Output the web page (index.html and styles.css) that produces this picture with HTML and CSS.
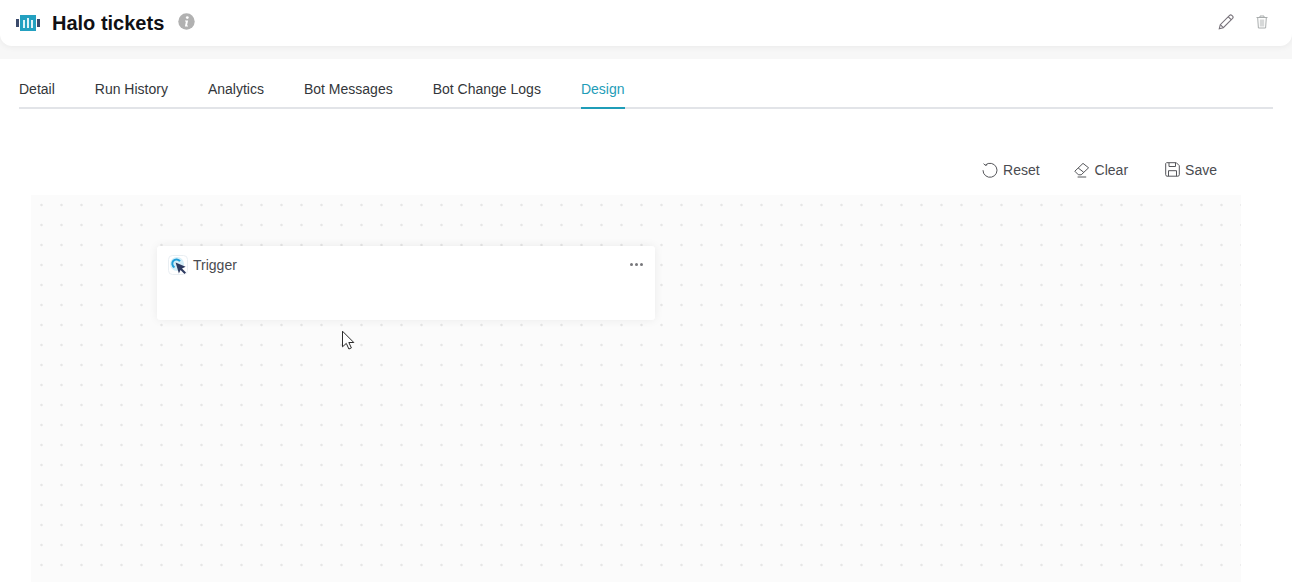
FILE: index.html
```html
<!DOCTYPE html>
<html lang="en">
<head>
<meta charset="utf-8">
<title>Halo tickets</title>
<link rel="stylesheet" href="styles.css">
</head>
<body>
<div class="top-band">
  <header class="header">
    <svg class="logo" width="24" height="16" viewBox="0 0 24 16">
      <rect x="0" y="4" width="3" height="8" fill="#3b4a6b"/>
      <rect x="21" y="4" width="3" height="8" fill="#3b4a6b"/>
      <rect x="4" y="0" width="16" height="16" fill="#23a0c0"/>
      <rect x="7" y="5" width="2" height="8" fill="#dff3f8"/>
      <rect x="11" y="3" width="2" height="10" fill="#dff3f8"/>
      <rect x="15" y="5" width="2" height="8" fill="#dff3f8"/>
    </svg>
    <h1 class="title">Halo tickets</h1>
    <svg class="info" width="17" height="17" viewBox="0 0 17 17">
      <circle cx="8.5" cy="8.5" r="8.2" fill="#b1b1b1"/>
      <circle cx="9.3" cy="4.6" r="1.4" fill="#fff"/>
      <path d="M7 7.4h3.1l-1.1 5h1v1.1H6.9l1-5H7z" fill="#fff"/>
    </svg>
    <div class="header-actions">
      <svg width="16" height="16" viewBox="0 0 16 16" fill="none" stroke="#77727a" stroke-width="1.1">
        <path d="M1.3 14.7l1-4L11.6 1.4a1.6 1.6 0 0 1 2.2 0l.8.8a1.6 1.6 0 0 1 0 2.2L5.3 13.7z"/>
        <path d="M10.3 2.8l2.9 2.9M2.3 10.7l3 3"/>
      </svg>
      <svg width="12" height="14" viewBox="0 0 12 14" fill="none" stroke="#a9adad" stroke-width="1">
        <path d="M0.5 2.5h11M4 2.3V1h4v1.3"/>
        <path d="M1.7 2.8l.7 10.2h7.2l.7-10.2"/>
        <rect x="3.8" y="4.5" width="4.4" height="7" fill="#d6d8d8" stroke="none"/>
      </svg>
    </div>
  </header>
</div>
<main class="main">
  <nav class="tabs">
    <a class="tab">Detail</a>
    <a class="tab">Run History</a>
    <a class="tab">Analytics</a>
    <a class="tab">Bot Messages</a>
    <a class="tab">Bot Change Logs</a>
    <a class="tab tab-active">Design</a>
  </nav>
  <div class="toolbar">
    <button class="tool">
      <svg width="16" height="16" viewBox="0 0 16 16" fill="none" stroke="#55565a" stroke-width="1">
        <path d="M3.4 3A7 7 0 1 1 1 8.2"/>
        <path d="M1.6 1.6l1.6 1.7 2-.4" />
      </svg>
      Reset
    </button>
    <button class="tool">
      <svg width="16" height="16" viewBox="0 0 16 16" fill="none" stroke="#55565a" stroke-width="1">
        <path d="M.8 9.2L9 1.4l5.6 4.4-7.4 7H4.4z"/>
        <path d="M4.2 6l5.4 4.2M3.6 15h8.6"/>
      </svg>
      Clear
    </button>
    <button class="tool tool-save">
      <svg width="15" height="15" viewBox="0 0 15 15" fill="none" stroke="#55565a" stroke-width="1">
        <path d="M1.5.7h9.8l3 3v9a1.5 1.5 0 0 1-1.5 1.5H2A1.5 1.5 0 0 1 .7 12.7V1.5z"/>
        <path d="M4 .9v3.6h6.5V.9M3.5 14.2V8.7h8v5.5"/>
      </svg>
      Save
    </button>
  </div>
  <section class="canvas">
    <article class="node">
      <svg class="node-icon" width="20" height="20" viewBox="0 0 20 20">
        <rect x="0.5" y="0.5" width="19" height="19" rx="4" fill="#fff" stroke="#e9eef2"/>
        <circle cx="9" cy="9" r="7" fill="#d4eef8"/>
        <path d="M12 6.3A4.2 4.2 0 1 0 6.5 12.3" fill="none" stroke="#1f9ed8" stroke-width="2"/>
        <path d="M7.6 7.6l10 4.2-3.6 1.6 4 4-1.5 1.5-4-4-1.6 3.6z" fill="#2d3a60"/>
      </svg>
      <span class="node-label">Trigger</span>
      <span class="node-menu"><i></i><i></i><i></i></span>
    </article>
    <svg class="cursor" width="16" height="22" viewBox="0 0 16 22">
      <path d="M1.5 1.2v15.6l3.8-3.4 2.6 5.6 2.5-1.1-2.6-5.4h5z" fill="#fff" stroke="#2a2a2a" stroke-width="1"/>
    </svg>
  </section>
</main>
</body>
</html>
```

FILE: styles.css
```css
* { box-sizing: border-box; }
html, body { margin: 0; height: 100%; overflow: hidden; background: #fff; }
body { font-family: "Liberation Sans", Arial, sans-serif; color: #3a3a3f; }

.top-band { background: #f7f7f7; height: 59px; }
.header {
  height: 46px;
  background: #fff;
  border-radius: 0 0 12px 12px;
  box-shadow: 0 1px 6px rgba(0, 0, 0, .06);
  display: flex;
  align-items: center;
  padding: 0 24px 0 16px;
}
.logo { display: block; }
.title {
  margin: 0 0 0 12px;
  font: 700 20px/28px "Liberation Sans", Arial, sans-serif;
  color: #101014;
}
.info { margin-left: 14px; margin-bottom: 3px; }
.header-actions {
  margin-left: auto;
  display: flex;
  align-items: center;
  gap: 22px;
  margin-bottom: 3px;
}

.main { padding: 0 19px; }
.tabs {
  display: flex;
  gap: 40px;
  height: 50px;
  border-bottom: 2px solid #e2e4e8;
}
.tab {
  font-size: 14px;
  line-height: 20px;
  padding-top: 20px;
  height: 50px;
  color: #33363a;
}
.tab-active { color: #1f9db8; border-bottom: 2px solid #1f9db8; min-width: 44px; }

.toolbar {
  display: flex;
  justify-content: flex-end;
  align-items: center;
  gap: 34px;
  height: 86px;
  padding: 35px 56px 0 0;
}
.tool {
  display: flex;
  align-items: center;
  gap: 5px;
  padding: 0;
  border: 0;
  background: none;
  font: 14px/20px "Liberation Sans", Arial, sans-serif;
  color: #4a4b50;
}
.tool-save { margin-left: 3px; }

.canvas {
  position: relative;
  margin-left: 12px;
  width: 1210px;
  height: 387px;
  background-color: #fbfbfb;
  background-image: radial-gradient(circle at 10.5px 10px, #e6e6e6 0, #e6e6e6 .8px, transparent 1.7px);
  background-size: 20px 20px;
}
.node {
  position: absolute;
  left: 126px;
  top: 51px;
  width: 498px;
  height: 74px;
  background: #fff;
  border-radius: 3px;
  box-shadow: 0 0 10px rgba(0, 0, 0, .07);
  display: flex;
  align-items: flex-start;
  padding: 9px 12px 0 11px;
}
.node-icon { display: block; flex: none; }
.node-label { margin-left: 5px; font-size: 14px; line-height: 20px; color: #4a4b50; }
.node-menu { margin-left: auto; display: flex; gap: 1.5px; padding-top: 7.5px; }
.node-menu i { width: 3.5px; height: 3.5px; border-radius: 50%; background: #77777b; }
.cursor { position: absolute; left: 310px; top: 135px; }
```
